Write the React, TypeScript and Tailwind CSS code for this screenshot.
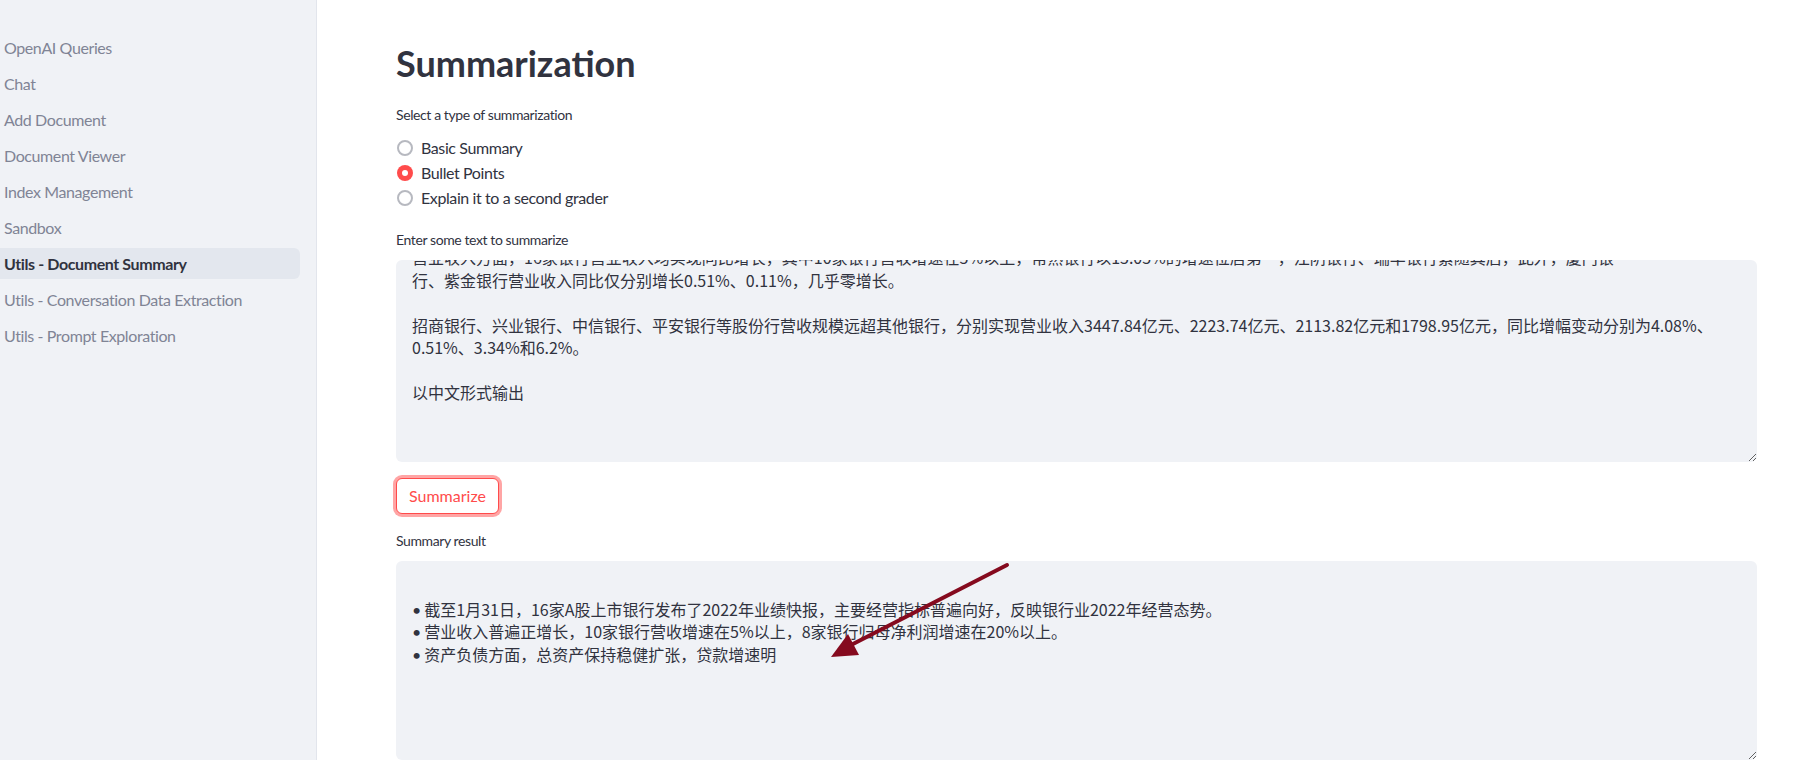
import { useState } from "react"

const pages = [
  "OpenAI Queries",
  "Chat",
  "Add Document",
  "Document Viewer",
  "Index Management",
  "Sandbox",
  "Utils - Document Summary",
  "Utils - Conversation Data Extraction",
  "Utils - Prompt Exploration",
]

const options = ["Basic Summary", "Bullet Points", "Explain it to a second grader"]

// lines of the input box, already scrolled so the first one is cut off
const inputLines = [
  "营业收入方面，16家银行营业收入均实现同比增长，其中10家银行营收增速在5%以上，常熟银行以15.05%的增速位居第一，江阴银行、瑞丰银行紧随其后，此外，厦门银",
  "行、紫金银行营业收入同比仅分别增长0.51%、0.11%，几乎零增长。",
  "",
  "招商银行、兴业银行、中信银行、平安银行等股份行营收规模远超其他银行，分别实现营业收入3447.84亿元、2223.74亿元、2113.82亿元和1798.95亿元，同比增幅变动分别为4.08%、",
  "0.51%、3.34%和6.2%。",
  "",
  "以中文形式输出",
]

const resultLines = [
  "截至1月31日，16家A股上市银行发布了2022年业绩快报，主要经营指标普遍向好，反映银行业2022年经营态势。",
  "营业收入普遍正增长，10家银行营收增速在5%以上，8家银行归母净利润增速在20%以上。",
  "资产负债方面，总资产保持稳健扩张，贷款增速明",
]

function Radio({ checked }: { checked: boolean }) {
  if (checked) {
    return (
      <span className="flex h-4 w-4 items-center justify-center rounded-full bg-[#ff4b4b]">
        <span className="h-[6px] w-[6px] rounded-full bg-white" />
      </span>
    )
  }
  return <span className="h-4 w-4 rounded-full border-2 border-[#b7b9c0] bg-white" />
}

export default function App() {
  const [choice, setChoice] = useState(1)

  return (
    <div className="relative flex h-[760px] w-full overflow-hidden bg-white font-['Lato','Noto_Sans_CJK_SC',sans-serif] tracking-[-0.025em] text-[#31333f]">
      {/* sidebar */}
      <aside className="w-[317px] shrink-0 border-r border-[#e2e5ec] bg-[#f0f2f6] pt-[32px]">
        <nav className="flex w-[300px] flex-col gap-[5px]">
          {pages.map((p) => {
            const active = p === "Utils - Document Summary"
            return (
              <div
                key={p}
                className={
                  active
                    ? "flex h-[31px] items-center rounded-r-md bg-[#e3e7ee] pl-[4px] text-[16px] font-bold text-[#31333f]"
                    : "flex h-[31px] items-center pl-[4px] text-[16px] text-[#808495]"
                }
              >
                {p}
              </div>
            )
          })}
        </nav>
      </aside>

      {/* main */}
      <main className="flex-1 pl-[79px] pr-[48px] pt-[42px]">
        <h1 className="text-[36px] font-bold leading-[43px] tracking-normal">Summarization</h1>

        <div className="mt-[20px] text-[14px] leading-[20px]">Select a type of summarization</div>
        <div className="mt-[10px] flex flex-col">
          {options.map((o, i) => (
            <label
              key={o}
              onClick={() => setChoice(i)}
              className="flex h-[25px] cursor-pointer items-center gap-[8px] pl-[1px] text-[16px]"
            >
              <Radio checked={choice === i} />
              <span>{o}</span>
            </label>
          ))}
        </div>

        <div className="mt-[20px] text-[14px] leading-[20px]">Enter some text to summarize</div>
        <div className="mt-[10px] h-[202px] resize-y overflow-hidden rounded-md bg-[#f0f2f6] px-4 font-['Noto_Sans_CJK_SC',sans-serif] text-[16px] leading-[22.5px] tracking-normal">
          <div className="-mt-[14px]">
            {inputLines.map((l, i) => (
              <div key={i} className="h-[22.5px] whitespace-nowrap">
                {l}
              </div>
            ))}
          </div>
        </div>

        <button className="mt-[16px] h-[36px] rounded-md border border-[#ff4b4b] bg-white px-3 text-[16px] tracking-normal text-[#ff4b4b] shadow-[0_0_0_3px_rgba(255,75,75,0.5)]">
          Summarize
        </button>

        <div className="mt-[17px] text-[14px] leading-[20px]">Summary result</div>
        <div className="mt-[10px] h-[199px] resize-y overflow-hidden rounded-md bg-[#f0f2f6] px-4 pt-[14px] font-['Noto_Sans_CJK_SC',sans-serif] text-[16px] leading-[22.5px] tracking-normal">
          <div className="h-[22.5px]" />
          {resultLines.map((l, i) => (
            <div key={i} className="h-[22.5px] whitespace-nowrap">
              <span className="mr-[3px] font-['Lato',sans-serif]">•</span>
              {l}
            </div>
          ))}
        </div>
      </main>

      {/* annotation arrow drawn over the result */}
      <svg className="pointer-events-none absolute left-0 top-0" width="1805" height="760">
        <line x1="1007" y1="565" x2="851" y2="645" stroke="#850a1e" strokeWidth="4" strokeLinecap="round" />
        <polygon points="831,657 859,655 848,634" fill="#850a1e" />
      </svg>
    </div>
  )
}
